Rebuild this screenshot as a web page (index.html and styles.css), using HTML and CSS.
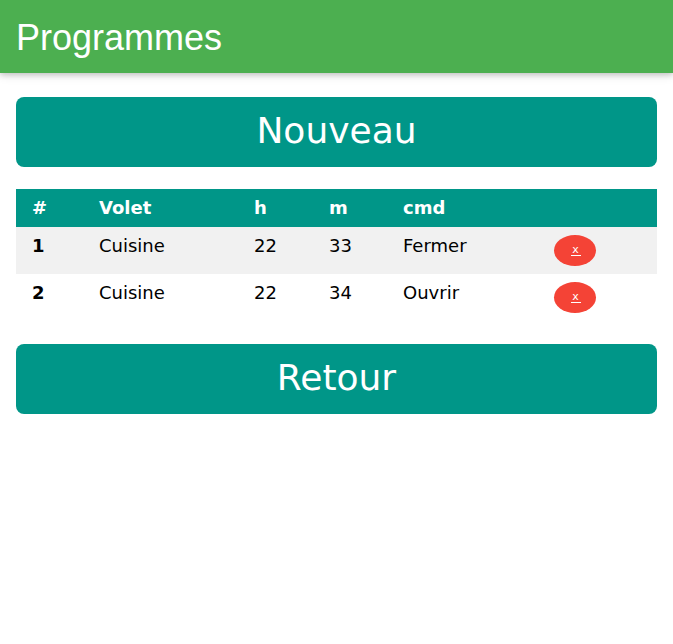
FILE: index.html
```html
<!DOCTYPE html>
<html lang="fr">
<head>
<meta charset="utf-8">
<title>Programmes</title>
<link rel="stylesheet" href="styles.css">
</head>
<body>
<header class="topbar">
  <h1 class="title">Programmes</h1>
</header>
<main class="content">
  <button class="big-btn">Nouveau</button>
  <table class="prog-table">
    <colgroup>
      <col class="c-num"><col class="c-volet"><col class="c-h"><col class="c-m"><col class="c-cmd"><col class="c-del">
    </colgroup>
    <thead>
      <tr><th>#</th><th>Volet</th><th>h</th><th>m</th><th>cmd</th><th></th></tr>
    </thead>
    <tbody>
      <tr class="striped"><td class="num">1</td><td>Cuisine</td><td>22</td><td>33</td><td>Fermer</td><td><button class="del-btn"><span class="del-x">x</span></button></td></tr>
      <tr><td class="num">2</td><td>Cuisine</td><td>22</td><td>34</td><td>Ouvrir</td><td><button class="del-btn"><span class="del-x">x</span></button></td></tr>
    </tbody>
  </table>
  <button class="big-btn">Retour</button>
</main>
</body>
</html>
```
FILE: styles.css
```css
html, body {
  margin: 0;
  padding: 0;
  background: #fff;
}
body {
  font-family: "DejaVu Sans", sans-serif;
  font-size: 18px;
  color: #000;
}
.topbar {
  background: #4CAF50;
  height: 73px;
  padding: 0 16px;
  box-sizing: border-box;
  box-shadow: 0 2px 5px 0 rgba(0,0,0,0.16), 0 2px 10px 0 rgba(0,0,0,0.12);
  overflow: hidden;
}
.title {
  margin: 11px 0 8px;
  font-family: "Liberation Sans", Arial, sans-serif;
  font-weight: normal;
  font-size: 36px;
  line-height: 54px;
  color: #fff;
}
.content {
  padding: 24px 16px 0;
  display: flex;
  flex-direction: column;
}
.big-btn {
  display: flex;
  align-items: center;
  justify-content: center;
  height: 70px;
  width: 100%;
  border: none;
  border-radius: 8px;
  background: #009688;
  color: #fff;
  font-family: "DejaVu Sans", sans-serif;
  font-size: 36px;
  line-height: 1;
  padding: 0 0 2px;
  margin: 0;
}
.prog-table {
  margin: 22px 0 23px;
  width: 100%;
  border-collapse: collapse;
  table-layout: fixed;
}
.c-num { width: 75px; }
.c-volet { width: 155px; }
.c-h { width: 75px; }
.c-m { width: 74px; }
.c-cmd { width: 151px; }
.c-del { width: 111px; }
.prog-table th,
.prog-table td {
  padding: 8px;
  line-height: 22px;
  text-align: left;
  vertical-align: top;
}
.prog-table th:first-child,
.prog-table td:first-child {
  padding-left: 16px;
}
.prog-table thead tr {
  background: #009688;
  color: #fff;
}
.prog-table th {
  font-weight: bold;
}
.prog-table .num {
  font-weight: bold;
}
.striped {
  background: #f1f1f1;
}
.del-btn {
  display: flex;
  align-items: center;
  justify-content: center;
  width: 42px;
  height: 31px;
  border: none;
  border-radius: 50%;
  background: #f44336;
  padding: 0 0 0 1px;
  margin: 0;
}
.del-x {
  display: inline-block;
  width: 10px;
  text-align: center;
  color: #fff;
  font-family: "DejaVu Sans", sans-serif;
  font-size: 11px;
  line-height: 10px;
  border-bottom: 1px solid #fff;
}
```
